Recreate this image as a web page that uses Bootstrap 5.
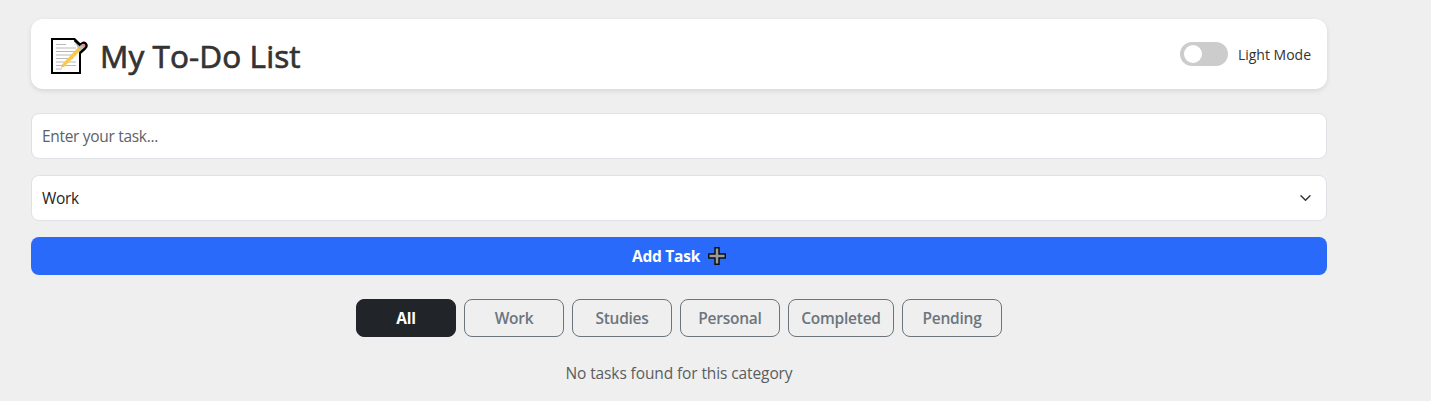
<!DOCTYPE html>
<html lang="en">
<head>
<meta charset="utf-8">
<meta name="viewport" content="width=device-width, initial-scale=1">
<title>My To-Do List</title>
<link rel="stylesheet" href="https://cdn.jsdelivr.net/npm/bootstrap@5.3.0/dist/css/bootstrap.min.css">
<style>
body { background: #efefef; color: #333; font-family: "Segoe UI", "Open Sans", "Noto Sans", sans-serif; overflow: hidden; }
.todo-app { width: 1320px; max-width: none; margin-left: 19px; margin-right: 0; padding-top: 19px; }
.app-header { height: 70px; background: #fff; border-radius: 12px; padding: 0 16px 0 20px; box-shadow: 0 2px 5px rgba(0,0,0,.1); margin-bottom: 24px; }
.app-header h1 { font-size: 31.5px; font-weight: 500; line-height: 38px; letter-spacing: .1px; margin-left: 12px; padding-top: 4px; -webkit-text-stroke: .7px #333; }
.switch-track { width: 48px; height: 24px; border-radius: 12px; background: #ccc; padding: 3px 4px; }
.switch-knob { width: 18px; height: 18px; border-radius: 50%; background: #fff; }
.mode-label { font-size: 14px; letter-spacing: 0; margin-left: 10px; }
.todo-app .form-control, .todo-app .form-select { height: 46px; padding: 10px; border-radius: 8px; border-color: #dee2e6; background-color: #fff; margin-bottom: 16px; font-size: 15.5px; letter-spacing: -.31px; line-height: 24px; }
.todo-app .form-control::placeholder { color: #5c6268; opacity: 1; }
.todo-app .form-select { color: #212529; background-position: right 14px center; background-size: 13px 12px; }
.btn-add { height: 38px; border-radius: 8px; background: #2a6afb; color: #fff; font-weight: 700; font-size: 15.5px; letter-spacing: -.25px; padding: 0; margin-bottom: 24px; }
.btn-add span { padding-top: 1px; }
.btn-filter { width: 100px; height: 38px; border-radius: 8px; padding: 1px 0 0; font-weight: 600; font-size: 15.5px; letter-spacing: -.25px; }
.btn-filter.btn-dark { font-weight: 700; }
.btn-filter.wide { width: 106px; }
.empty-note { color: #5a5d60; margin-top: 24px; font-size: 15.5px; letter-spacing: -.11px; line-height: 24px; }
</style>
</head>
<body>
<main class="container-fluid todo-app">
  <header class="app-header d-flex align-items-center justify-content-between">
    <div class="d-flex align-items-center">
      <svg width="37" height="36" viewBox="0 0 37 36" class="mt-1" aria-hidden="true">
        <path d="M1 1H23.500L29 6.500V35H1Z" fill="#fff" stroke="#000" stroke-width="2"/>
        <path d="M23.500 2V7H28Z" fill="#e6e6e6"/>
        <path d="M5 6.500H15M5 10H25M5 13.500H25M5 17H25M5 20.500H22M5 24H25M5 27.500H25M5 31H11" stroke="#b9b9b9" stroke-width="1.200"/>
        <path d="M23.500 2L29 7L31 5.500Q33.500 4 35 6Q36.500 8.500 34 10.500L29 15" fill="#b5b5b5" stroke="#000" stroke-width="2.400"/>
        <path d="M11 26.500L27 9.500L30 12L13.500 28.500L10.500 29.500Z" fill="#fcc845"/>
        <path d="M11 26.500L13.500 28.500L10.200 29.800Z" fill="#e3b5a4"/>
        <path d="M27 9.500L30 7L33 9.500L30 12Z" fill="#b9bec0"/>
        <path d="M30 7Q32 4.800 33.700 6.500Q35 8 33 9.500Z" fill="#f58f80"/>
      </svg>
      <h1 class="mb-0">My To-Do List</h1>
    </div>
    <div class="d-flex align-items-center">
      <div class="switch-track" role="switch" aria-checked="false"><div class="switch-knob"></div></div>
      <span class="mode-label">Light Mode</span>
    </div>
  </header>

  <input class="form-control" type="text" placeholder="Enter your task...">
  <select class="form-select"><option>Work</option><option>Studies</option><option>Personal</option></select>
  <button class="btn btn-add w-100 d-flex align-items-center justify-content-center" type="button">
    <span>Add Task</span>
    <svg class="add-icon ms-2" width="18" height="18" viewBox="0 0 18 18" aria-hidden="true"><path d="M7 .75H11V7H17.250V11H11V17.250H7V11H.75V7H7Z" fill="#9b9b9b" stroke="#111" stroke-width="1.500"/></svg>
  </button>

  <div class="d-flex justify-content-center gap-2">
    <button class="btn btn-dark btn-filter" type="button">All</button>
    <button class="btn btn-outline-secondary btn-filter" type="button">Work</button>
    <button class="btn btn-outline-secondary btn-filter" type="button">Studies</button>
    <button class="btn btn-outline-secondary btn-filter" type="button">Personal</button>
    <button class="btn btn-outline-secondary btn-filter wide" type="button">Completed</button>
    <button class="btn btn-outline-secondary btn-filter" type="button">Pending</button>
  </div>
  <p class="empty-note text-center mb-0">No tasks found for this category</p>
</main>
<script src="https://cdn.jsdelivr.net/npm/bootstrap@5.3.0/dist/js/bootstrap.bundle.min.js"></script>
</body>
</html>
